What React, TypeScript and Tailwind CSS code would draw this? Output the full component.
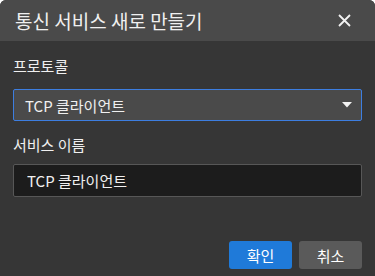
import React, { useState } from "react";

export default function App() {
  const [protocol] = useState("TCP 클라이언트");
  const [name, setName] = useState("TCP 클라이언트");

  return (
    <div
      className="w-[375px] h-[276px] bg-[#363636] text-[#f0f0f0] flex flex-col overflow-hidden rounded-t-[6px]"
      style={{ fontFamily: '"Noto Sans CJK KR", "Noto Sans", sans-serif' }}
    >
      {/* Title bar */}
      <div className="h-[41px] shrink-0 bg-[#4a4a4a] flex items-center justify-between pl-[15px] pr-[24px]">
        <span className="text-[19px] leading-none">통신 서비스 새로 만들기</span>
        <button className="text-white">
          <svg width="13" height="13" viewBox="0 0 13 13" fill="none">
            <path d="M1 1L12 12M12 1L1 12" stroke="#f2f2f2" strokeWidth="1.8" />
          </svg>
        </button>
      </div>

      {/* Body */}
      <div className="flex-1 flex flex-col px-[13px] pt-[15px]">
        <label className="text-[15px] leading-[20px]">프로토콜</label>
        <div className="mt-[13px] h-[32px] bg-[#4a4a4a] border border-[#3d7ee0] rounded-[2px] flex items-center justify-between pl-[11px] pr-[9px]">
          <span className="text-[15px] leading-none">{protocol}</span>
          <svg width="10" height="6" viewBox="0 0 10 6">
            <path d="M0 0H10L5 5.5Z" fill="#f2f2f2" />
          </svg>
        </div>

        <label className="mt-[14px] text-[15px] leading-[20px]">서비스 이름</label>
        <input
          value={name}
          onChange={(e) => setName(e.target.value)}
          className="mt-[9px] h-[33px] bg-[#1c1c1c] border border-[#575757] rounded-[2px] pl-[13px] text-[15px] text-[#f0f0f0] outline-none"
        />

        <div className="mt-auto mb-[7px] flex justify-end gap-[7px]">
          <button className="w-[63px] h-[28px] rounded-[3px] bg-[#1f7ad9] text-white text-[15px] leading-none">
            확인
          </button>
          <button className="w-[63px] h-[28px] rounded-[3px] bg-[#5a5a5a] text-white text-[15px] leading-none">
            취소
          </button>
        </div>
      </div>
    </div>
  );
}
